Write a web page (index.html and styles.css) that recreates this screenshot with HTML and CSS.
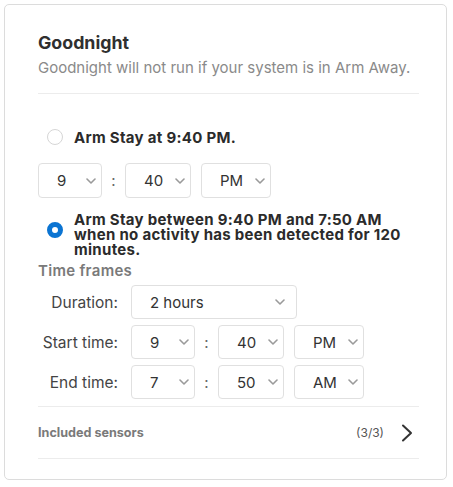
FILE: index.html
```html
<!DOCTYPE html>
<html>
<head>
<meta charset="utf-8">
<link rel="stylesheet" href="styles.css">
</head>
<body>
<div class="card">
  <div class="head">
    <h1 class="title">Goodnight</h1>
    <p class="sub">Goodnight will not run if your system is in Arm Away.</p>
  </div>
  <div class="option opt1">
    <span class="radio"></span>
    <span class="opt-text">Arm Stay at 9:40 PM.</span>
  </div>
  <div class="time-row row1">
    <div class="sel w1"><span>9</span><svg class="chev" viewBox="0 0 10 6"><path d="M1 1l4 4 4-4"/></svg></div>
    <span class="colon">:</span>
    <div class="sel w2"><span>40</span><svg class="chev" viewBox="0 0 10 6"><path d="M1 1l4 4 4-4"/></svg></div>
    <div class="sel w3"><span>PM</span><svg class="chev" viewBox="0 0 10 6"><path d="M1 1l4 4 4-4"/></svg></div>
  </div>
  <div class="option opt2">
    <span class="radio on"></span>
    <span class="opt-text">Arm Stay between 9:40 PM and 7:50 AM when no activity has been detected for 120 minutes.</span>
  </div>
  <div class="frames-title">Time frames</div>
  <div class="frames">
    <span class="lbl">Duration:</span>
    <div class="sel wd"><span>2 hours</span><svg class="chev" viewBox="0 0 10 6"><path d="M1 1l4 4 4-4"/></svg></div>
    <span class="lbl">Start time:</span>
    <div class="time-row">
      <div class="sel w1"><span>9</span><svg class="chev" viewBox="0 0 10 6"><path d="M1 1l4 4 4-4"/></svg></div>
      <span class="colon">:</span>
      <div class="sel w2"><span>40</span><svg class="chev" viewBox="0 0 10 6"><path d="M1 1l4 4 4-4"/></svg></div>
      <div class="sel w3"><span>PM</span><svg class="chev" viewBox="0 0 10 6"><path d="M1 1l4 4 4-4"/></svg></div>
    </div>
    <span class="lbl">End time:</span>
    <div class="time-row">
      <div class="sel w1"><span>7</span><svg class="chev" viewBox="0 0 10 6"><path d="M1 1l4 4 4-4"/></svg></div>
      <span class="colon">:</span>
      <div class="sel w2"><span>50</span><svg class="chev" viewBox="0 0 10 6"><path d="M1 1l4 4 4-4"/></svg></div>
      <div class="sel w3"><span>AM</span><svg class="chev" viewBox="0 0 10 6"><path d="M1 1l4 4 4-4"/></svg></div>
    </div>
  </div>
  <div class="sensors">
    <span class="sens-lbl">Included sensors</span>
    <span class="sens-count">(3/3)</span>
    <svg class="arrow" viewBox="0 0 14 18"><path d="M3 1.5l8 7.5-8 7.5"/></svg>
  </div>
</div>
</body>
</html>
```
FILE: styles.css
```css
* { box-sizing: border-box; }
html, body { margin: 0; padding: 0; background: #fff; }
body {
  font-family: Inter, "Noto Sans", "Liberation Sans", sans-serif;
  color: #333;
}
.card {
  margin: 4px;
  width: 443px;
  height: 476px;
  border: 1px solid #dcdcdc;
  border-radius: 5px;
  padding: 0 27px 0 33px;
}
.head {
  padding-top: 27px;
  padding-bottom: 16px;
  border-bottom: 1px solid #ececec;
}
.title {
  margin: 0;
  font-size: 17.8px;
  line-height: 22px;
  font-weight: 700;
  color: #2f2f2f;
}
.sub {
  margin: 5px 0 0;
  font-size: 15px;
  line-height: 18px;
  color: #8a8a8a;
}
.option {
  display: flex;
  align-items: center;
  gap: 11px;
  padding-left: 9px;
}
.opt1 { margin-top: 35px; }
.opt2 { margin-top: 14px; align-items: flex-start; }
.radio {
  flex: none;
  width: 16px;
  height: 16px;
  border-radius: 50%;
  border: 1px solid #d6d6d6;
  background: #fff;
}
.radio.on {
  border: 5px solid #0b74d2;
  margin-top: 10px;
}
.opt-text {
  font-size: 15px;
  line-height: 15px;
  font-weight: 700;
  letter-spacing: 0.3px;
  color: #2b2b2b;
}
.opt2 .opt-text { width: 330px; }
.time-row {
  display: flex;
  align-items: center;
}
.row1 { margin-top: 18px; }
.sel {
  display: flex;
  align-items: center;
  justify-content: space-between;
  height: 35px;
  border: 1px solid #e0e0e0;
  border-radius: 4px;
  padding: 0 5px 0 18px;
  font-size: 15px;
  color: #333;
  background: #fff;
}
.w1 { width: 64px; }
.w2 { width: 66px; }
.w3 { width: 70px; }
.wd { width: 166px; padding-right: 11px; }
.colon {
  width: 23px;
  text-align: center;
  color: #666;
  font-size: 15px;
}
.w2 + .w3 { margin-left: 10px; }
.chev {
  width: 10px;
  height: 6px;
  fill: none;
  stroke: #9a9a9a;
  stroke-width: 1.6;
  stroke-linecap: round;
  stroke-linejoin: round;
}
.frames-title {
  margin-top: 5px;
  font-size: 15px;
  line-height: 18px;
  font-weight: 600;
  letter-spacing: 0.3px;
  color: #7a7a7a;
}
.frames {
  display: grid;
  grid-template-columns: 80px auto;
  column-gap: 13px;
  row-gap: 6px;
  align-items: center;
  justify-items: start;
  margin-top: 5px;
  padding-bottom: 7px;
  border-bottom: 1px solid #ececec;
}
.frames .sel { height: 34px; }
.lbl {
  justify-self: end;
  font-size: 15.5px;
  color: #444;
}
.sensors {
  display: flex;
  align-items: center;
  height: 52px;
  border-bottom: 1px solid #ececec;
}
.sens-lbl {
  flex: 1;
  font-size: 12.6px;
  font-weight: 700;
  color: #7a7a7a;
}
.sens-count {
  font-size: 12px;
  color: #555;
}
.arrow {
  width: 14px;
  height: 18px;
  margin-left: 16px;
  margin-right: 5px;
  fill: none;
  stroke: #333;
  stroke-width: 2;
  stroke-linecap: round;
  stroke-linejoin: round;
}
```
